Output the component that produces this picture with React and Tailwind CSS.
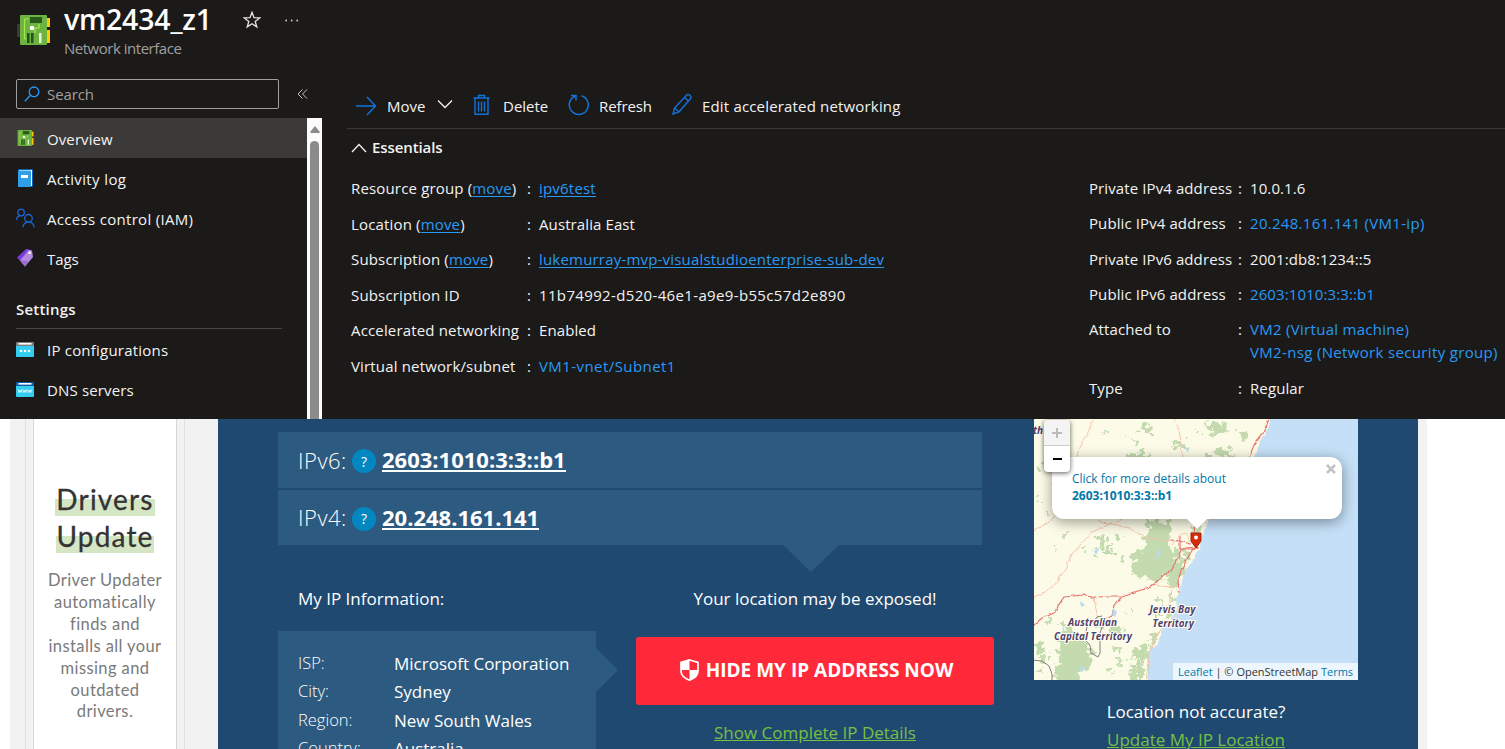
import React from "react";

function NicIcon({ className }) {
  return (
    <svg viewBox="0 0 34 32" className={className}>
      <rect x="0" y="9" width="4" height="13" fill="#3b3a39" />
      <rect x="29" y="3" width="4" height="9" fill="#ffca00" />
      <rect x="29" y="15" width="4" height="13" fill="#ffca00" />
      <rect x="3" y="0" width="27" height="30" rx="1" fill="#6cb33f" />
      <path d="M7.500 4v20M7.500 4h4M22 9v4h-4v5M7.500 24h2" fill="none" stroke="#a4e84b" strokeWidth="1.200" />
      <rect x="13" y="2" width="12" height="6" fill="#2b5a1d" />
      <circle cx="15" cy="13" r="2.300" fill="#fff" />
      <rect x="10" y="18" width="2.500" height="10" fill="#24501a" />
      <rect x="14" y="18" width="2.500" height="10" fill="#24501a" />
      <rect x="22" y="18" width="2.500" height="10" fill="#e8f5dc" />
    </svg>
  );
}

function LogIcon() {
  return (
    <svg viewBox="0 0 18 20" className="h-5 w-[18px]">
      <rect x="2" y="1" width="15" height="18" rx="1" fill="#0f5fae" />
      <rect x="3" y="2" width="13" height="16" fill="#fff" />
      <rect x="2" y="2.500" width="13" height="16.500" rx="1" fill="#2f9fea" />
      <rect x="5" y="7" width="7" height="3" fill="#fff" />
    </svg>
  );
}

function PeopleIcon() {
  return (
    <svg viewBox="0 0 20 20" className="h-5 w-5" fill="none" stroke="#1b66d8" strokeWidth="1.300">
      <circle cx="5" cy="4.500" r="3.300" />
      <path d="M.7 12c0-3 1.800-4.300 4-4.300" />
      <circle cx="12.500" cy="10.300" r="3.800" />
      <path d="M7 19.300c.3-3.200 2.500-5.200 5.500-5.200s5.300 2 5.700 5.200" />
    </svg>
  );
}

function TagIcon() {
  return (
    <svg viewBox="0 0 18 20" className="h-5 w-[18px]">
      <path d="M2 10 11 1.500 16 2.500 17 9 9 18.500Z" fill="#b48be0" />
      <path d="M1 9.500 10 1h3.500L4 12.500Z" fill="#7a3bd8" />
      <path d="M4 12.500 12.500 13 9 18.500Z" fill="#9a6bcb" />
      <circle cx="13.600" cy="4.800" r="1.400" fill="#fff" />
    </svg>
  );
}

function WindowIcon({ www }) {
  return (
    <svg viewBox="0 0 18 15" className="h-[15px] w-[18px]">
      <rect width="18" height="15" rx="1" fill={www ? "#0f5da8" : "#7d7d7d"} />
      <rect x="2.500" y="1" width="13" height="1.600" fill="#fff" />
      <path d="M0 4h18v10a1 1 0 0 1-1 1H1a1 1 0 0 1-1-1Z" fill="#32cdf0" />
      {www ? (
        <path d="m2 7.500 1 3 1-2.500 1 2.500 1-3M6.800 7.500l1 3 1-2.500 1 2.500 1-3M11.700 7.500l1 3 1-2.500 1 2.500 1-3" fill="none" stroke="#fff" strokeWidth=".8" />
      ) : (
        <g fill="#fff">
          <circle cx="5" cy="9" r="1.300" />
          <circle cx="9" cy="9" r="1.300" />
          <circle cx="13" cy="9" r="1.300" />
        </g>
      )}
    </svg>
  );
}

function NavItem({ icon, label, active, tracking = "" }) {
  return (
    <div className={"flex h-10 items-center " + (active ? "bg-[#3b3a39]" : "")}>
      <span className="flex w-[47px] shrink-0 justify-start pl-4">{icon}</span>
      <span className={"relative top-px text-[15px] text-[#f3f2f1] " + tracking}>{label}</span>
    </div>
  );
}

function Field({ label, move, children, wide, h }) {
  return (
    <div className={"flex items-start leading-[23px] " + (h || (wide ? "h-[35.5px]" : "h-[35.25px]"))}>
      <span className={"shrink-0 " + (wide ? "w-[176px] tracking-[0.16px]" : "w-[149px]")}>
        {label}
        {move && (
          <>
            {" ("}
            <a className="text-[#2899f5] underline underline-offset-2">move</a>)
          </>
        )}
      </span>
      <span className="w-3 shrink-0">:</span>
      <span className="flex flex-col">{children}</span>
    </div>
  );
}

function Portal() {
  return (
    <section className="flex h-[419px] flex-col bg-[#1b1a19] text-[#f3f2f1]">
      <div className="flex h-[70px] shrink-0">
        <div className="w-16 pl-[17px] pt-[15px]">
          <NicIcon className="h-8 w-[34px]" />
        </div>
        <div className="flex w-[179px] flex-col">
          <h1 className="h-[38px] text-[28.5px] font-semibold leading-[38px] tracking-[-0.2px] text-white">vm2434_z1</h1>
          <p className="text-[15px] leading-[21px] tracking-[-0.48px] text-[#a19f9d]">Network interface</p>
        </div>
        <svg viewBox="0 0 18 18" className="mt-[11px] h-[18px] w-[18px]" fill="none" stroke="#e8e6e4" strokeWidth="1.300">
          <path d="m9 1.300 2 5.400 5.700.2-4.500 3.500 1.600 5.500L9 12.700l-4.800 3.200 1.600-5.500L1.300 6.900 7 6.700Z" />
        </svg>
        <svg viewBox="0 0 14 4" className="ml-6 mt-[19px] h-1 w-[14px]" fill="#d8d6d4">
          <circle cx="1.200" cy="1.500" r=".9" />
          <circle cx="6.700" cy="1.500" r=".9" />
          <circle cx="12.200" cy="1.500" r=".9" />
        </svg>
      </div>

      <div className="flex min-h-0 flex-1">
        <aside className="flex w-[347px] shrink-0 flex-col">
          <div className="flex h-12 items-start pl-4 pt-[9px]">
            <div className="flex h-[30px] w-[263px] items-center rounded-[2px] border border-[#a19f9d] pl-[7px]">
              <svg viewBox="0 0 16 16" className="h-4 w-4" fill="none" stroke="#2899f5" strokeWidth="1.300">
                <circle cx="10" cy="5.800" r="4.800" />
                <path d="M6.500 9.300.8 15.200" />
              </svg>
              <span className="ml-[7px] text-[15px] tracking-[-0.1px] text-[#a19f9d]">Search</span>
            </div>
            <svg viewBox="0 0 12 10" className="ml-[18px] mt-[10px] h-[10px] w-3" fill="none" stroke="#c8c6c4" strokeWidth="1">
              <path d="M5.500.5 1 5l4.500 4.500M10 .5 5.500 5 10 9.500" />
            </svg>
          </div>
          <div className="flex flex-1">
            <nav className="flex w-[307px] flex-col">
              <NavItem active icon={<NicIcon className="h-[17px] w-[18px]" />} label="Overview" tracking="tracking-[0.1px]" />
              <NavItem icon={<LogIcon />} label="Activity log" tracking="tracking-[0.38px]" />
              <NavItem icon={<PeopleIcon />} label="Access control (IAM)" tracking="tracking-[0.31px]" />
              <NavItem icon={<TagIcon />} label="Tags" tracking="tracking-[-0.1px]" />
              <div className="ml-4 mr-[25px] h-[51px] border-b border-[#484644] pt-5 text-[15px] font-semibold leading-[22px] tracking-[0.2px]">
                Settings
              </div>
              <NavItem icon={<WindowIcon />} label="IP configurations" tracking="tracking-[0.21px]" />
              <NavItem icon={<WindowIcon www />} label="DNS servers" tracking="tracking-[0.15px]" />
            </nav>
            <div className="flex w-[15px] flex-col items-center bg-[#fbfbfb] pt-2">
              <svg viewBox="0 0 10 7" className="h-[7px] w-[10px]" fill="#8b8b8b">
                <path d="M5 0 9.500 5.500V7H.5V5.500Z" />
              </svg>
              <div className="mt-2 w-[9px] flex-1 rounded-t-[5px] bg-[#8b8b8b]" />
            </div>
          </div>
        </aside>

        <main className="flex flex-1 flex-col text-[15px]">
          <div className="flex h-[59px] items-center border-b border-[#3a3938] pl-[9px] pt-[14px]">
            <svg viewBox="0 0 20 20" className="h-5 w-5" fill="none" stroke="#1173d8" strokeWidth="1.500">
              <path d="M0 10h19M11 1l8.500 9L11 19" />
            </svg>
            <span className="ml-[11px] w-[41px]">Move</span>
            <svg viewBox="0 0 16 10" className="ml-[9px] mt-[-4px] h-[10px] w-4" fill="none" stroke="#f3f2f1" strokeWidth="1.300">
              <path d="m1 1.500 7 7 7-7" />
            </svg>
            <svg viewBox="0 0 17 22" className="ml-5 mt-[-2px] h-[22px] w-[17px]" fill="none" stroke="#1173d8" strokeWidth="1.400">
              <path d="M.5 4h16M5.500 4V1.500h6V4M2 4v16.300h13V4" />
              <path d="M5.500 7.500v10M8.500 7.500v10M11.500 7.500v10" />
            </svg>
            <span className="ml-[13px] w-[47px] whitespace-nowrap">Delete</span>
            <svg viewBox="0 0 22 22" className="ml-[18px] mt-[-2px] h-[22px] w-[22px]" fill="none" stroke="#1173d8" strokeWidth="1.500">
              <path d="M13.500 1.800A9.500 9.500 0 1 1 7 2.200M3 1.500h5v5" />
            </svg>
            <span className="ml-[9px] w-[53px] whitespace-nowrap tracking-[-0.1px]">Refresh</span>
            <svg viewBox="0 0 20 22" className="ml-5 mt-[-4px] h-[22px] w-5" fill="none" stroke="#1173d8" strokeWidth="1.400">
              <path d="m1 21 1.500-6L14.500 2.200c2-2 5.700 1.200 4 3.500L7 18.800ZM2.500 15l4.500 3.800M12.500 4.500l4 3.600" />
            </svg>
            <span className="ml-[10px] whitespace-nowrap tracking-[0.17px]">Edit accelerated networking</span>
          </div>
          <div className="flex h-12 items-start pl-1 pt-[7px]">
            <svg viewBox="0 0 16 10" className="mt-[7px] h-[10px] w-4" fill="none" stroke="#f3f2f1" strokeWidth="1.300">
              <path d="m1 9 7-7.500L15 9" />
            </svg>
            <span className="ml-[5px] font-semibold leading-[22px] tracking-[-0.1px]">Essentials</span>
          </div>
          <div className="flex pl-1 tracking-[0.1px]">
            <div className="w-[738px] shrink-0">
              <Field wide label="Resource group" move>
                <a className="tracking-[0.2px] text-[#2899f5] underline underline-offset-2">ipv6test</a>
              </Field>
              <Field wide label="Location" move>Australia East</Field>
              <Field wide label="Subscription" move>
                <a className="tracking-[0.19px] text-[#2899f5] underline underline-offset-2">lukemurray-mvp-visualstudioenterprise-sub-dev</a>
              </Field>
              <Field wide label="Subscription ID">
                <span className="tracking-[0.35px]">11b74992-d520-46e1-a9e9-b55c57d2e890</span>
              </Field>
              <Field wide label="Accelerated networking">Enabled</Field>
              <Field wide label="Virtual network/subnet">
                <a className="tracking-[0.43px] text-[#2899f5]">VM1-vnet/Subnet1</a>
              </Field>
            </div>
            <div className="whitespace-nowrap">
              <Field label="Private IPv4 address">10.0.1.6</Field>
              <Field label="Public IPv4 address">
                <a className="tracking-[0.3px] text-[#2899f5]">20.248.161.141 (VM1-ip)</a>
              </Field>
              <Field label="Private IPv6 address">2001:db8:1234::5</Field>
              <Field label="Public IPv6 address">
                <a className="text-[#2899f5]">2603:1010:3:3::b1</a>
              </Field>
              <Field label="Attached to" h="h-[59px]">
                <a className="tracking-[0.29px] text-[#2899f5]">VM2 (Virtual machine)</a>
                <a className="tracking-[0.34px] text-[#2899f5]">VM2-nsg (Network security group)</a>
              </Field>
              <Field label="Type">Regular</Field>
            </div>
          </div>
        </main>
      </div>
    </section>
  );
}

function AdPanel() {
  return (
    <div className="ml-[10px] flex w-[208px] shrink-0 bg-[#f2f2f2] pl-[15px]">
      <div className="flex w-[160px] justify-center border-x border-[#e0e0e0]">
        <div className="flex w-[144px] flex-col items-center border-x border-[#d8d8d8] bg-white pt-[62px] font-['Lato'] text-center">
          <h2 className="text-[28px] leading-[37px] tracking-[1.2px] text-[#333] [-webkit-text-stroke:0.3px_#333]">
            <span className="bg-[linear-gradient(transparent_50%,#d5e6c5_50%)] px-[1px]">Drivers</span>
            <br />
            <span className="bg-[linear-gradient(transparent_50%,#d5e6c5_50%)]">Update</span>
          </h2>
          <p className="mt-[15px] whitespace-nowrap text-[16.5px] leading-[21.900px] tracking-[0.4px] text-[#7a7a7a]">
            Driver Updater
            <br />
            automatically
            <br />
            finds and
            <br />
            installs all your
            <br />
            missing and
            <br />
            outdated
            <br />
            drivers.
          </p>
        </div>
      </div>
    </div>
  );
}

function AddressRow({ label, value, h }) {
  return (
    <div className={"flex items-center bg-[#2d5a80] pl-5 " + h}>
      <span className="w-[54px] text-[22px] font-light tracking-[0.5px]">{label}</span>
      <span className="mt-[2px] flex h-6 w-6 items-center justify-center rounded-full bg-[#0387c0] text-[14px]">?</span>
      <a className="ml-[6px] border-b-2 border-white text-[22px] font-bold leading-[22px]">{value}</a>
    </div>
  );
}

function InfoRow({ label, value }) {
  return (
    <div className="flex h-[28.500px] items-center">
      <span className="w-[96px] text-[16.500px] font-light">{label}</span>
      <span className="whitespace-nowrap">{value}</span>
    </div>
  );
}

function LocationMap() {
  return (
    <div className="relative h-[261px] w-[324px] shrink-0 overflow-hidden">
      <svg viewBox="0 0 324 261" className="h-full w-full">
        <defs>
          <filter id="rough" x="-5%" y="-5%" width="110%" height="110%" colorInterpolationFilters="sRGB">
            <feTurbulence type="fractalNoise" baseFrequency=".14" numOctaves="3" seed="4" />
            <feDisplacementMap in="SourceGraphic" scale="18" xChannelSelector="R" yChannelSelector="G" />
          </filter>
          <filter id="wobble" x="-5%" y="-5%" width="110%" height="110%" colorInterpolationFilters="sRGB">
            <feTurbulence type="fractalNoise" baseFrequency=".15" numOctaves="2" seed="7" />
            <feDisplacementMap in="SourceGraphic" scale="4" xChannelSelector="R" yChannelSelector="G" />
          </filter>
        </defs>
        <rect width="324" height="261" fill="#c4dff6" />
        <path
          filter="url(#wobble)"
          fill="#fcfbe7"
          d="M-9-9H238L235 8 226 22 221 38 206 58 190 80 174 103 169 116 165 129 158 143 150 153 147 167 146 174 142 180 143 190 138 199 129 209 123 226 116 230 113 240 114 251 113 270H-9Z"
        />
        <g filter="url(#rough)" fill="#c3dbae">
          <path d="M110 102h30l-5 14-1 10 10 4 3 8-7 6-3 10-8 3-6 5-16-3-11-6 4-10-2-9 9-4 2-8 6-6Z" />
          <path d="M142 144l10-13 4 6-8 16-6 13-12-3 7-11Z" />
          <path d="M158 106l12-4-4 12-10 2Z" />
          <path d="M170 4h18l8 6-8 5-14-2ZM106 8h12v6h-10ZM138 22h10l3 7-9 2ZM180 29h16l4 8-16 2ZM92 34h18l6 6-24 1ZM202 12h10l4 6-10 2ZM172 34h6v8h-6Z" />
          <path d="M28 204l10 6 8 8 8 6 6 16-4 8-8 4-2 12H22l-2-14 6-12-2-12 4-6Z" />
          <path d="M100 230l12-4 4 8-8 8-10-2ZM98 248l10-6 6 8-2 12H96ZM114 222l8-10 4 6-8 10ZM76 206l10 2 2 8-12 4ZM112 145l10 4-6 6ZM0 222l8 4 4 8H2ZM64 120h6v8h-6ZM72 130h8v6h-8ZM82 118h6v4h-6ZM130 186l8 4-4 10-6-2Z" />
        </g>
        <g filter="url(#rough)" fill="#c9deb4">
          <path d="M6 46h4v3H6ZM10 92h5v3h-5ZM30 115h5v3h-5ZM22 60h4v3h-4ZM70 12h4v3h-4ZM46 126h4v4h-4ZM86 140h5v3h-5ZM96 20h4v3h-4ZM160 10h4v3h-4ZM140 56h4v3h-4ZM124 180h3v6h-3ZM120 200h5v4h-5ZM12 200h6v4h-6ZM78 228h8v5h-8ZM84 240h6v4h-6ZM72 250h6v4h-6ZM60 204h7v4h-7ZM94 190h5v3h-5ZM20 128h4v3h-4ZM58 138h5v3h-5ZM4 80h4v3H4ZM6 238h6v5H6ZM66 116h5v4h-5ZM76 124h5v4h-5ZM4 250h6v4H4ZM134 176h5v5h-5Z" />
        </g>
        <g filter="url(#wobble)" fill="none" strokeWidth="1" stroke="#f6c4ac">
          <path d="M60 0l-8 18-8 14-4 24M140 0l6 16 2 22M0 179l20-12 12-18 6-14 20-22 22-10 16-6M0 112l14-8 10-10 14-3M64 102l28 6 24 12 28 2M60 179l4 22M118 166l20 2 6 6M138 170l-4 18 4 10-14 16-8 18-4 30M138 126l6-8 8-4 4 8 8 6" />
        </g>
        <g filter="url(#wobble)" fill="none" strokeWidth="1.200" stroke="#e8736f">
          <path d="M-4 212l4-6 8-7 14-6 2-6 6-9 20-2 10 3 12-2h16l12-4 15-4 10-8 12-10 6-10 4-10 4-2 12-1" />
          <path d="M88 178l-8 8-2 10-6 2M160 128l-8 14-5 10-3 8 1 14M137 121l8 1 12 3M146 118v12h14M161 105l-1 12 3 12M235 0l-4 12-10 12-6 14" />
        </g>
        <path fill="none" stroke="#77717d" strokeWidth=".9" d="M68 197l-5 1-4 5-6 4-2 14 5 5 1 8 7 4 2-4V214l3-8 10-6M-2 241l10 1 7 5 3 8v6" />
        <g fill="#b9d9f4">
          <path d="M152 30l4-2-2 5ZM60 132l6-4-4 8ZM79 189l4 4-2 5-3-2ZM46 182l5 4-4 2ZM45 247l6 2-3 5ZM124 129l3 6-5 6 2-6ZM28 208l3 3-2 2Z" />
        </g>
        <g fontFamily="Open Sans" fontStyle="italic" fontWeight="700" fontSize="10" fill="#51416a" stroke="#fffdf4" strokeWidth="2" paintOrder="stroke">
          <text x="-1" y="15">th</text>
          <text x="115.500" y="194" textLength="46">Jervis Bay</text>
          <text x="118.500" y="208" textLength="41.500">Territory</text>
          <text x="34" y="207" textLength="49">Australian</text>
          <text x="20" y="221" textLength="78">Capital Territory</text>
        </g>
      </svg>

      <div className="absolute left-[18px] top-[38px] h-[62px] w-[290px] rounded-xl bg-white px-5 pt-[13px] text-[12px] leading-[17px] text-[#0078a8] shadow-[0_3px_14px_rgba(0,0,0,0.4)]">
        Click for more details about
        <br />
        <b>2603:1010:3:3::b1</b>
        <svg viewBox="0 0 10 10" className="absolute right-[6px] top-[7px] h-[10px] w-[10px]" stroke="#c3c3c3" strokeWidth="2.500">
          <path d="m1 1 8 8M9 1 1 9" />
        </svg>
      </div>
      <svg viewBox="0 0 22 11" className="absolute left-[152px] top-[99px] h-[11px] w-[22px]" fill="#fff">
        <path d="M0 0h22L11 11Z" />
      </svg>
      <svg viewBox="0 0 12 17" className="absolute left-[156px] top-[113px] h-[17px] w-3">
        <path d="M1 1h10v8l-5 7-5-7Z" fill="#d62c0b" stroke="#98240e" strokeWidth="1" />
        <circle cx="6" cy="5.500" r="2" fill="#fff" />
      </svg>
      <div className="absolute left-[10px] top-px flex h-[52px] w-[26px] flex-col rounded bg-white shadow-[0_1px_5px_rgba(0,0,0,0.65)]">
        <div className="flex h-[26px] items-center justify-center rounded-t border-b border-[#ccc] bg-[#f4f4f4]">
          <svg viewBox="0 0 12 12" className="h-3 w-3" stroke="#bbb" strokeWidth="2">
            <path d="M6 1v10M1 6h10" />
          </svg>
        </div>
        <div className="flex h-[26px] items-center justify-center">
          <div className="ml-px h-[2px] w-[9px] bg-black" />
        </div>
      </div>
      <div className="absolute bottom-0 right-0 h-[17px] w-[185px] whitespace-nowrap bg-white/70 pl-[5px] text-[11px] leading-[17px] text-[#333]">
        <a className="text-[#0078a8]">Leaflet</a> | © OpenStreetMap <a className="text-[#0078a8]">Terms</a>
      </div>
    </div>
  );
}

function IpPage() {
  return (
    <section className="flex h-[330px] overflow-hidden bg-white">
      <AdPanel />
      <div className="flex w-[1200px] shrink-0 bg-[#1f4971] pl-[60px] text-[17px] text-white">
        <div className="flex w-[756px] flex-col pt-[13px]">
          <div className="relative flex w-[704px] flex-col gap-[2px]">
            <AddressRow label="IPv6:" value="2603:1010:3:3::b1" h="h-14" />
            <AddressRow label="IPv4:" value="20.248.161.141" h="h-[55px]" />
            <svg viewBox="0 0 56 27" className="absolute left-[505px] top-[113px] h-[27px] w-14" fill="#2d5a80">
              <path d="M0 0h56L28 27Z" />
            </svg>
          </div>
          <div className="mt-[42px] flex h-6 items-center leading-6">
            <span className="w-[358px] pl-5">My IP Information:</span>
            <span className="w-[358px] text-center">Your location may be exposed!</span>
          </div>
          <div className="mt-5 flex gap-10">
            <div className="relative h-[140px] w-[318px] bg-[#2d5a80] pl-5 pt-[18px] text-[17px]">
              <InfoRow label="ISP:" value="Microsoft Corporation" />
              <InfoRow label="City:" value="Sydney" />
              <InfoRow label="Region:" value="New South Wales" />
              <InfoRow label="Country:" value="Australia" />
              <svg viewBox="0 0 22 44" className="absolute left-[318px] top-[17px] h-11 w-[22px]" fill="#2d5a80">
                <path d="M0 0 22 22 0 44Z" />
              </svg>
            </div>
            <div className="flex w-[358px] flex-col items-center pt-[6px]">
              <button className="flex h-[68px] w-full items-center justify-center rounded-[3px] bg-[#ff293a] pb-[2px] pl-[3px] text-[19px] font-bold">
                <svg viewBox="0 0 19 22" className="mr-[7px] h-[22px] w-[19px]">
                  <path d="M9.500 1 18 3.500V12c0 4.500-4 7.500-8.500 9.200C5 19.500 1 16.500 1 12V3.500Z" fill="none" stroke="#fff" strokeWidth="1.700" />
                  <path d="M9.500 1v10H1V3.500ZM9.500 11H18v1c0 4.500-4 7.500-8.500 9.200Z" fill="#fff" />
                </svg>
                <span className="whitespace-nowrap">HIDE MY IP ADDRESS NOW</span>
              </button>
              <a className="mt-4 leading-6 text-[#77c043] underline">Show Complete IP Details</a>
            </div>
          </div>
        </div>
        <div className="flex w-[324px] flex-col items-center">
          <LocationMap />
          <span className="mt-5 shrink-0 leading-6">Location not accurate?</span>
          <a className="mt-1 shrink-0 leading-6 text-[#77c043] underline">Update My IP Location</a>
        </div>
      </div>
      <div className="w-[9px] bg-[#f2f2f2]" />
    </section>
  );
}

export default function App() {
  return (
    <div className="h-[749px] w-[1505px] overflow-hidden font-['Open_Sans','Noto_Sans',sans-serif]">
      <Portal />
      <IpPage />
    </div>
  );
}
